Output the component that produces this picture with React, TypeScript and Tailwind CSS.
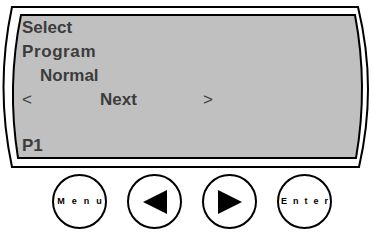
import React from "react";

const Bezel = () => (
  <svg
    className="absolute inset-0"
    width="373"
    height="172"
    viewBox="0 0 373 172"
    fill="none"
  >
    <path
      d="M12 7 L358 7 Q377.5 87 359 167 L12 167 Q-5 87 12 7 Z"
      fill="#ffffff"
      stroke="#000"
      strokeWidth="2"
    />
    <path
      d="M21 15 L355 15 Q368.5 86 356 158 L18 158 Q6.5 86 21 15 Z"
      fill="#c0c0c0"
      stroke="#000"
      strokeWidth="2"
    />
  </svg>
);

const RoundButton = ({ children }: { children: React.ReactNode }) => (
  <div className="w-[55px] h-[55px] rounded-full border-2 border-black bg-white flex items-center justify-center">
    {children}
  </div>
);

export default function App() {
  return (
    <div
      className="w-[373px] h-[232px] bg-white overflow-hidden"
      style={{ fontFamily: '"Liberation Sans", Arial, sans-serif' }}
    >
      {/* LCD panel */}
      <div className="relative h-[172px]">
        <Bezel />
        <div className="relative pt-[16px] pl-[22px] text-[17px] leading-[24px] font-bold text-[#3c3c3c]">
          <div>Select</div>
          <div className="tracking-[0.6px]">Program</div>
          <div className="pl-[18px]">Normal</div>
          <div className="flex">
            <span className="w-[78px] font-normal">&lt;</span>
            <span className="w-[103px]">Next</span>
            <span className="font-normal">&gt;</span>
          </div>
          <div className="mt-[22px]">P1</div>
        </div>
      </div>

      {/* Keys */}
      <div className="flex gap-[20px] pl-[52px] pt-[2px]">
        <RoundButton>
          <span className="text-[9px] font-bold tracking-[7px] text-black -mr-[7px]">
            Menu
          </span>
        </RoundButton>
        <RoundButton>
          <svg width="26" height="26" viewBox="0 0 26 26">
            <path d="M1 13 L25 1 L25 25 Z" fill="#000" />
          </svg>
        </RoundButton>
        <RoundButton>
          <svg width="26" height="26" viewBox="0 0 26 26">
            <path d="M25 13 L1 1 L1 25 Z" fill="#000" />
          </svg>
        </RoundButton>
        <RoundButton>
          <span className="text-[9px] font-bold tracking-[6px] text-black -mr-[6px]">
            Enter
          </span>
        </RoundButton>
      </div>
    </div>
  );
}
